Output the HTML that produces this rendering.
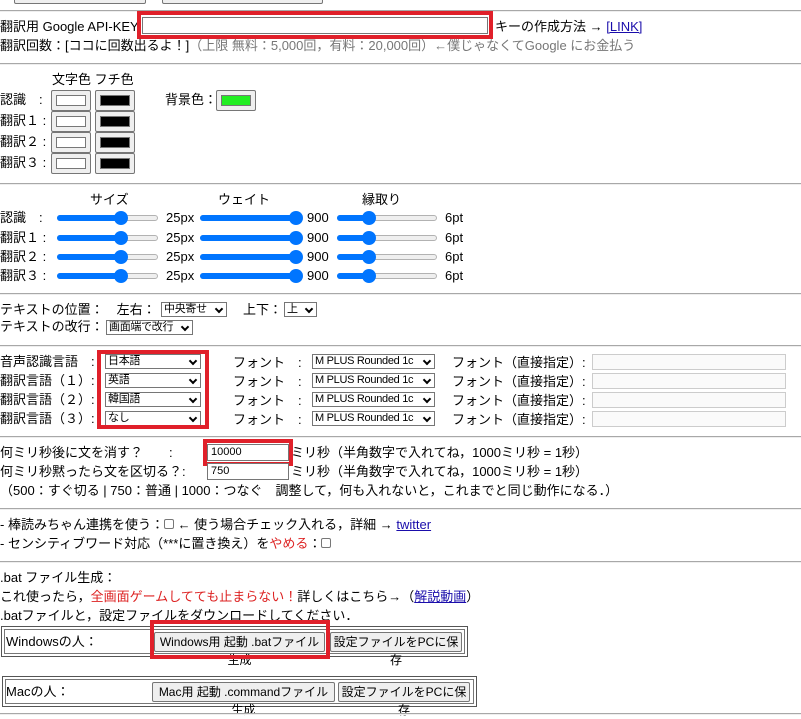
<!DOCTYPE html>
<html><head><meta charset="utf-8"><style>
body{margin:0;width:801px;height:719px;overflow:hidden;background:#fff;position:relative;font-family:"Liberation Sans","Noto Sans CJK JP",sans-serif;font-size:13px;color:#000}
.a{position:absolute;white-space:nowrap;line-height:16px}
.hr{position:absolute;left:0;width:801px;height:0;border-top:1px solid #a8a8a8;border-bottom:1px solid #eee}
.btn{position:absolute;background:#efefef;border:1px solid #767676;border-radius:2px;box-sizing:border-box;font-size:12px;text-align:center;line-height:18px}
.cb{position:absolute;width:40px;height:21px;background:#efefef;border:1px solid #767676;box-sizing:border-box;border-radius:2px}
.cb i{position:absolute;left:4px;top:4px;right:4px;bottom:4px;border:1px solid #777}
.sl{position:absolute;height:6px;border-radius:3px;background:#efefef;border:1px solid #b2b2b2;box-sizing:border-box}
.sl b{position:absolute;left:-1px;top:-1px;height:6px;border-radius:3px;background:#0075ff}
.sl i{position:absolute;top:-5px;width:14px;height:14px;border-radius:50%;background:#0075ff;margin-left:-7px}
.sel{position:absolute;height:15px;border:1px solid #767676;box-sizing:border-box;font-size:11px;line-height:13px;padding-left:2px;background:#fff;letter-spacing:-0.3px}
.sel:after{content:"";position:absolute;right:4px;top:3px;width:4px;height:4px;border-right:2px solid #000;border-bottom:2px solid #000;transform:rotate(45deg)}
.inp{position:absolute;border:1px solid #767676;box-sizing:border-box;background:#fff}
.red{position:absolute;border:4px solid #e0202a;box-sizing:border-box}
.g{color:#777}
</style></head><body>
<div class="btn" style="left:14px;top:-16px;width:132px;height:20px"></div>
<div class="btn" style="left:162px;top:-16px;width:161px;height:20px"></div>
<div class="hr" style="top:10px"></div>

<div class="a" style="left:0;top:19px">翻訳用 Google API-KEY</div>
<div class="inp" style="left:142px;top:17px;width:346px;height:17px"></div>
<div class="red" style="left:137px;top:11px;width:356px;height:28px"></div>
<div class="a" style="left:495px;top:19px">キーの作成方法 → <span style="color:#1a0dab;text-decoration:underline">[LINK]</span></div>
<div class="a" style="left:0;top:38px">翻訳回数：[ココに回数出るよ！]<span class="g">（上限 無料：5,000回，有料：20,000回）←僕じゃなくてGoogle にお金払う</span></div>
<div class="hr" style="top:63px"></div>

<div class="a" style="left:52px;top:72px">文字色 フチ色</div>
<div class="a" style="left:0;top:92px">認識　:</div>
<div class="a" style="left:0;top:113px">翻訳１ :</div>
<div class="a" style="left:0;top:134px">翻訳２ :</div>
<div class="a" style="left:0;top:155px">翻訳３ :</div>
<div class="cb" style="left:51px;top:90px"><i style="background:#fff"></i></div>
<div class="cb" style="left:95px;top:90px"><i style="background:#000"></i></div>
<div class="cb" style="left:51px;top:111px"><i style="background:#fff"></i></div>
<div class="cb" style="left:95px;top:111px"><i style="background:#000"></i></div>
<div class="cb" style="left:51px;top:132px"><i style="background:#fff"></i></div>
<div class="cb" style="left:95px;top:132px"><i style="background:#000"></i></div>
<div class="cb" style="left:51px;top:153px"><i style="background:#fff"></i></div>
<div class="cb" style="left:95px;top:153px"><i style="background:#000"></i></div>
<div class="a" style="left:165px;top:92px">背景色：</div>
<div class="cb" style="left:216px;top:90px"><i style="background:#22ee22"></i></div>
<div class="hr" style="top:183px"></div>

<div class="a" style="left:90px;top:192px">サイズ</div>
<div class="a" style="left:218px;top:192px">ウェイト</div>
<div class="a" style="left:362px;top:192px">縁取り</div>

<div class="a" style="left:0;top:210px">認識　:</div>
<div class="a" style="left:0;top:230px">翻訳１ :</div>
<div class="a" style="left:0;top:249px">翻訳２ :</div>
<div class="a" style="left:0;top:268px">翻訳３ :</div>

<div class="sl" style="left:57px;top:215px;width:101px"><b style="width:64px"></b><i style="left:63px"></i></div>
<div class="sl" style="left:200px;top:215px;width:100px"><b style="width:97px"></b><i style="left:95px"></i></div>
<div class="sl" style="left:337px;top:215px;width:100px"><b style="width:33px"></b><i style="left:31px"></i></div>
<div class="sl" style="left:57px;top:235px;width:101px"><b style="width:64px"></b><i style="left:63px"></i></div>
<div class="sl" style="left:200px;top:235px;width:100px"><b style="width:97px"></b><i style="left:95px"></i></div>
<div class="sl" style="left:337px;top:235px;width:100px"><b style="width:33px"></b><i style="left:31px"></i></div>
<div class="sl" style="left:57px;top:254px;width:101px"><b style="width:64px"></b><i style="left:63px"></i></div>
<div class="sl" style="left:200px;top:254px;width:100px"><b style="width:97px"></b><i style="left:95px"></i></div>
<div class="sl" style="left:337px;top:254px;width:100px"><b style="width:33px"></b><i style="left:31px"></i></div>
<div class="sl" style="left:57px;top:273px;width:101px"><b style="width:64px"></b><i style="left:63px"></i></div>
<div class="sl" style="left:200px;top:273px;width:100px"><b style="width:97px"></b><i style="left:95px"></i></div>
<div class="sl" style="left:337px;top:273px;width:100px"><b style="width:33px"></b><i style="left:31px"></i></div>

<div class="a" style="left:166px;top:210px">25px</div><div class="a" style="left:307px;top:210px">900</div><div class="a" style="left:445px;top:210px">6pt</div>
<div class="a" style="left:166px;top:230px">25px</div><div class="a" style="left:307px;top:230px">900</div><div class="a" style="left:445px;top:230px">6pt</div>
<div class="a" style="left:166px;top:249px">25px</div><div class="a" style="left:307px;top:249px">900</div><div class="a" style="left:445px;top:249px">6pt</div>
<div class="a" style="left:166px;top:268px">25px</div><div class="a" style="left:307px;top:268px">900</div><div class="a" style="left:445px;top:268px">6pt</div>
<div class="hr" style="top:293px"></div>

<div class="a" style="left:0;top:302px">テキストの位置：　左右：</div>
<div class="sel" style="left:161px;top:302px;width:66px">中央寄せ</div>
<div class="a" style="left:243px;top:302px">上下：</div>
<div class="sel" style="left:284px;top:302px;width:33px">上</div>
<div class="a" style="left:0;top:319px">テキストの改行：</div>
<div class="sel" style="left:106px;top:320px;width:87px">画面端で改行</div>
<div class="hr" style="top:345px"></div>

<div class="a" style="left:0;top:354px">音声認識言語　:</div>
<div class="a" style="left:0;top:373px">翻訳言語（１）:</div>
<div class="a" style="left:0;top:392px">翻訳言語（２）:</div>
<div class="a" style="left:0;top:411px">翻訳言語（３）:</div>
<div class="sel" style="left:105px;top:354px;width:96px">日本語</div>
<div class="sel" style="left:105px;top:373px;width:96px">英語</div>
<div class="sel" style="left:105px;top:392px;width:96px">韓国語</div>
<div class="sel" style="left:105px;top:411px;width:96px">なし</div>
<div class="red" style="left:97px;top:350px;width:112px;height:79px"></div>
<div class="a" style="left:233px;top:355px">フォント　:</div>
<div class="a" style="left:233px;top:374px">フォント　:</div>
<div class="a" style="left:233px;top:393px">フォント　:</div>
<div class="a" style="left:233px;top:412px">フォント　:</div>
<div class="sel" style="left:312px;top:354px;width:123px">M PLUS Rounded 1c</div>
<div class="sel" style="left:312px;top:373px;width:123px">M PLUS Rounded 1c</div>
<div class="sel" style="left:312px;top:392px;width:123px">M PLUS Rounded 1c</div>
<div class="sel" style="left:312px;top:411px;width:123px">M PLUS Rounded 1c</div>
<div class="a" style="left:452px;top:355px">フォント（直接指定）:</div>
<div class="a" style="left:452px;top:374px">フォント（直接指定）:</div>
<div class="a" style="left:452px;top:393px">フォント（直接指定）:</div>
<div class="a" style="left:452px;top:412px">フォント（直接指定）:</div>
<div class="inp" style="left:592px;top:354px;width:194px;height:16px;background:#fafafa;border-color:#ccc"></div>
<div class="inp" style="left:592px;top:373px;width:194px;height:16px;background:#fafafa;border-color:#ccc"></div>
<div class="inp" style="left:592px;top:392px;width:194px;height:16px;background:#fafafa;border-color:#ccc"></div>
<div class="inp" style="left:592px;top:411px;width:194px;height:16px;background:#fafafa;border-color:#ccc"></div>
<div class="hr" style="top:436px"></div>

<div class="a" style="left:0;top:445px">何ミリ秒後に文を消す？　　:</div>
<div class="inp" style="left:207px;top:444px;width:82px;height:17px;font-size:11px;line-height:15px;padding-left:3px">10000</div>
<div class="red" style="left:203px;top:439px;width:90px;height:27px"></div>
<div class="a" style="left:291px;top:445px">ミリ秒（半角数字で入れてね，1000ミリ秒 = 1秒）</div>
<div class="a" style="left:0;top:464px">何ミリ秒黙ったら文を区切る？:</div>
<div class="inp" style="left:207px;top:463px;width:82px;height:17px;font-size:11px;line-height:15px;padding-left:3px">750</div>
<div class="a" style="left:291px;top:464px">ミリ秒（半角数字で入れてね，1000ミリ秒 = 1秒）</div>
<div class="a" style="left:0;top:483px">（500：すぐ切る | 750：普通 | 1000：つなぐ　調整して，何も入れないと，これまでと同じ動作になる．）</div>
<div class="hr" style="top:508px"></div>

<div class="a" style="left:0;top:517px">- 棒読みちゃん連携を使う：<span style="display:inline-block;width:8px;height:8px;border:1px solid #777;border-radius:2px"></span> ← 使う場合チェック入れる，詳細 → <span style="color:#1a0dab;text-decoration:underline">twitter</span></div>
<div class="a" style="left:0;top:536px">- センシティブワード対応（***に置き換え）を<span style="color:#d22">やめる</span>：<span style="display:inline-block;width:8px;height:8px;border:1px solid #777;border-radius:2px"></span></div>
<div class="hr" style="top:561px"></div>

<div class="a" style="left:0;top:570px">.bat ファイル生成：</div>
<div class="a" style="left:0;top:589px">これ使ったら，<span style="color:#d22">全画面ゲームしてても止まらない！</span>詳しくはこちら→（<span style="color:#1a0dab;text-decoration:underline">解説動画</span>）</div>
<div class="a" style="left:0;top:608px">.batファイルと，設定ファイルをダウンロードしてください．</div>

<div style="position:absolute;left:1px;top:626px;width:467px;height:31px;border:1px solid #555;box-sizing:border-box"><div style="position:absolute;left:2px;top:2px;right:2px;bottom:2px;border:1px solid #777"></div></div>
<div class="a" style="left:6px;top:634px">Windowsの人：</div>
<div class="btn" style="left:154px;top:632px;width:171px;height:20px">Windows用 起動 .batファイル生成</div>
<div class="btn" style="left:330px;top:632px;width:132px;height:20px">設定ファイルをPCに保存</div>
<div class="red" style="left:150px;top:620px;width:180px;height:39px"></div>

<div style="position:absolute;left:2px;top:676px;width:475px;height:31px;border:1px solid #555;box-sizing:border-box"><div style="position:absolute;left:2px;top:2px;right:2px;bottom:2px;border:1px solid #777"></div></div>
<div class="a" style="left:6px;top:684px">Macの人：</div>
<div class="btn" style="left:152px;top:682px;width:183px;height:20px">Mac用 起動 .commandファイル生成</div>
<div class="btn" style="left:338px;top:682px;width:132px;height:20px">設定ファイルをPCに保存</div>
<div class="hr" style="top:713px"></div>
</body></html>
